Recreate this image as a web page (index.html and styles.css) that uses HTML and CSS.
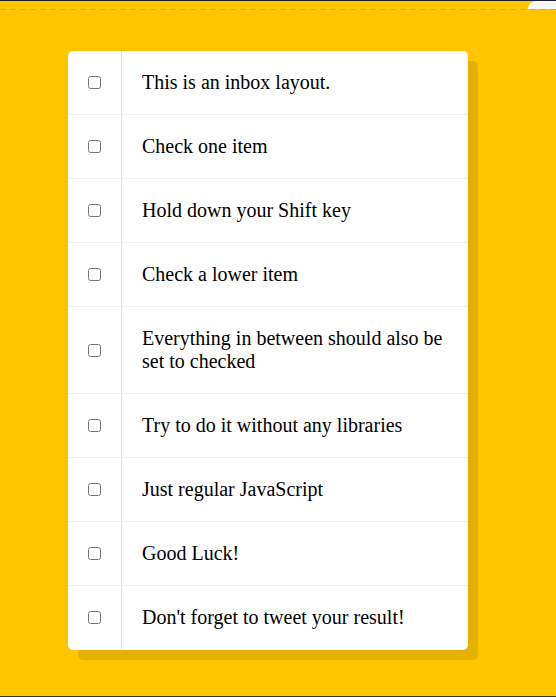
FILE: index.html
```html
<!DOCTYPE html>
<html>
<head>
<meta charset="utf-8">
<link rel="stylesheet" href="styles.css">
</head>
<body>
<div class="frame-top"></div>
<div class="dash-line"></div>
<div class="corner-tab"></div>
<div class="page">
  <div class="inbox">
    <div class="item"><input type="checkbox"><p class="message">This is an inbox layout.</p></div>
    <div class="item"><input type="checkbox"><p class="message">Check one item</p></div>
    <div class="item"><input type="checkbox"><p class="message">Hold down your Shift key</p></div>
    <div class="item"><input type="checkbox"><p class="message">Check a lower item</p></div>
    <div class="item"><input type="checkbox"><p class="message">Everything in between should also be set to checked</p></div>
    <div class="item"><input type="checkbox"><p class="message">Try to do it without any libraries</p></div>
    <div class="item"><input type="checkbox"><p class="message">Just regular JavaScript</p></div>
    <div class="item"><input type="checkbox"><p class="message">Good Luck!</p></div>
    <div class="item"><input type="checkbox"><p class="message">Don't forget to tweet your result!</p></div>
  </div>
</div>
<div class="frame-bottom"></div>
</body>
</html>
```
FILE: styles.css
```css
html {
  background: #ffc600;
  height: 100%;
}
body {
  margin: 0;
  height: 697px;
  overflow: hidden;
  position: relative;
  font-family: "Liberation Serif", serif;
}
.frame-top {
  height: 1px;
  background: #1c1c28;
}
.frame-bottom {
  position: absolute;
  left: 0;
  right: 0;
  bottom: 0;
  height: 1px;
  background: #333333;
}
.dash-line {
  position: absolute;
  left: 0;
  right: 0;
  top: 9px;
  height: 1px;
  background: repeating-linear-gradient(to right, #bcab80 0 6px, transparent 6px 10px);
}
.corner-tab {
  position: absolute;
  top: 1px;
  left: 528px;
  right: 0;
  height: 8px;
  background: #f6f6f6;
  border-top-left-radius: 8px;
}
.page {
  padding-right: 20px;
  padding-top: 50px;
}
.inbox {
  max-width: 400px;
  margin: 0 auto;
  background: #ffffff;
  border-radius: 5px;
  box-shadow: 10px 10px 0 rgba(0, 0, 0, 0.1);
}
.item {
  display: flex;
  align-items: center;
  border-bottom: 1px solid #f1f1f1;
}
.item:last-child {
  border-bottom-color: transparent;
}
.item input[type="checkbox"] {
  margin: 20px;
}
.message {
  margin: 0;
  padding: 20px;
  flex: 1;
  font-size: 20px;
  color: #000;
  border-left: 1px solid #d1e2ff;
}
```
